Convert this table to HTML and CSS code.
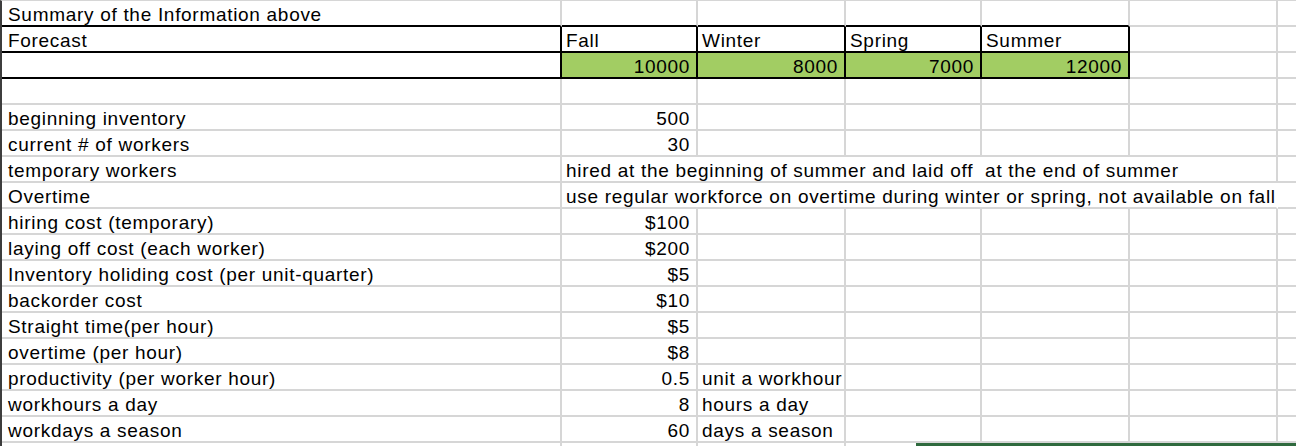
FILE: index.html
```html
<!DOCTYPE html>
<html lang="en">
<head>
<meta charset="utf-8">
<title>Summary of the Information above</title>
<link rel="stylesheet" href="styles.css">
</head>
<body>
<div class="sheet">
  <div class="row">
    <div class="c a bb">Summary of the Information above</div>
    <div class="c bb"></div><div class="c bb"></div><div class="c bb"></div><div class="c bb"></div><div class="c"></div><div class="c"></div>
  </div>
  <div class="row">
    <div class="c a bb br">Forecast</div>
    <div class="c bb br">Fall</div>
    <div class="c bb br">Winter</div>
    <div class="c bb br">Spring</div>
    <div class="c bb br">Summer</div>
    <div class="c"></div><div class="c"></div>
  </div>
  <div class="row">
    <div class="c a bb br"></div>
    <div class="c bb br g r">10000</div>
    <div class="c bb br g r">8000</div>
    <div class="c bb br g r">7000</div>
    <div class="c bb br g r">12000</div>
    <div class="c"></div><div class="c"></div>
  </div>
  <div class="row">
    <div class="c a"></div><div class="c"></div><div class="c"></div><div class="c"></div><div class="c"></div><div class="c"></div><div class="c"></div>
  </div>
  <div class="row">
    <div class="c a">beginning inventory</div><div class="c r">500</div><div class="c"></div><div class="c"></div><div class="c"></div><div class="c"></div><div class="c"></div>
  </div>
  <div class="row">
    <div class="c a">current # of workers</div><div class="c r">30</div><div class="c"></div><div class="c"></div><div class="c"></div><div class="c"></div><div class="c"></div>
  </div>
  <div class="row">
    <div class="c a">temporary workers</div><div class="c span5 spill">hired at the beginning of summer and laid off&nbsp; at the end of summer</div><div class="c"></div>
  </div>
  <div class="row">
    <div class="c a">Overtime</div><div class="c span5 spill nobr">use regular workforce on overtime during winter or spring, not available on fall</div><div class="c"></div>
  </div>
  <div class="row">
    <div class="c a">hiring cost (temporary)</div><div class="c r">$100</div><div class="c"></div><div class="c"></div><div class="c"></div><div class="c"></div><div class="c"></div>
  </div>
  <div class="row">
    <div class="c a">laying off cost (each worker)</div><div class="c r">$200</div><div class="c"></div><div class="c"></div><div class="c"></div><div class="c"></div><div class="c"></div>
  </div>
  <div class="row">
    <div class="c a">Inventory holiding cost (per unit-quarter)</div><div class="c r">$5</div><div class="c"></div><div class="c"></div><div class="c"></div><div class="c"></div><div class="c"></div>
  </div>
  <div class="row">
    <div class="c a">backorder cost</div><div class="c r">$10</div><div class="c"></div><div class="c"></div><div class="c"></div><div class="c"></div><div class="c"></div>
  </div>
  <div class="row">
    <div class="c a">Straight time(per hour)</div><div class="c r">$5</div><div class="c"></div><div class="c"></div><div class="c"></div><div class="c"></div><div class="c"></div>
  </div>
  <div class="row">
    <div class="c a">overtime (per hour)</div><div class="c r">$8</div><div class="c"></div><div class="c"></div><div class="c"></div><div class="c"></div><div class="c"></div>
  </div>
  <div class="row">
    <div class="c a">productivity (per worker hour)</div><div class="c r">0.5</div><div class="c">unit a workhour</div><div class="c"></div><div class="c"></div><div class="c"></div><div class="c"></div>
  </div>
  <div class="row">
    <div class="c a">workhours a day</div><div class="c r">8</div><div class="c">hours a day</div><div class="c"></div><div class="c"></div><div class="c"></div><div class="c"></div>
  </div>
  <div class="row">
    <div class="c a">workdays a season</div><div class="c r">60</div><div class="c">days a season</div><div class="c"></div><div class="c"></div><div class="c"></div><div class="c"></div>
  </div>
  <div class="row last">
    <div class="c a"></div><div class="c"></div><div class="c"></div><div class="c"></div><div class="c"></div><div class="c"></div><div class="c"></div>
  </div>
  <div class="selection"></div>
</div>
</body>
</html>
```

FILE: styles.css
```css
html, body {
  margin: 0;
  padding: 0;
  background: #ffffff;
  overflow: hidden;
}

.sheet {
  position: relative;
  box-sizing: border-box;
  width: 1296px;
  height: 446px;
  overflow: hidden;
  border-left: 2px solid #3d3d3d;
  border-top: 1px solid #d6d6d6;
  font-family: "Liberation Sans", Arial, Helvetica, sans-serif;
  font-size: 19px;
  letter-spacing: 0.7px;
  color: #000000;
}

.row {
  display: grid;
  grid-template-columns: 560px 136px 148px 136px 148px 148px 148px;
  height: 26px;
}

.row.last {
  height: 3px;
  overflow: hidden;
}

.c {
  box-sizing: border-box;
  height: 26px;
  padding: 3px 6px 0 4px;
  line-height: 21px;
  white-space: nowrap;
  overflow: hidden;
  border-right: 2px solid #d6d6d6;
  border-bottom: 2px solid #d6d6d6;
}

.a {
  padding-left: 6px;
}

.r {
  text-align: right;
}

.bb {
  border-bottom-color: #000000;
}

.br {
  border-right-color: #000000;
}

.g {
  background: #a2cd63;
}

.span5 {
  grid-column: span 5;
}

.spill {
  overflow: visible;
  position: relative;
  z-index: 1;
}

.nobr {
  border-right-color: transparent;
}

.selection {
  position: absolute;
  left: 914px;
  top: 442px;
  width: 382px;
  height: 3px;
  background: #2f6a3e;
}
```
